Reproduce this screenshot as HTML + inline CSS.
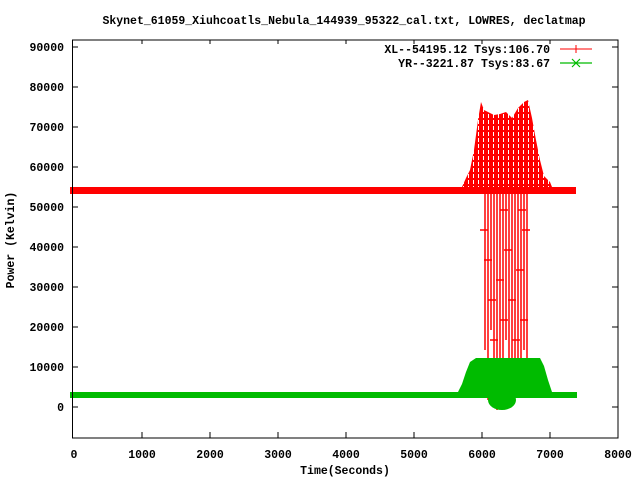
<!DOCTYPE html>
<html><head><style>
body{margin:0;background:#fff}
svg{display:block}
text{font-family:"Liberation Mono",monospace;font-weight:bold;font-size:11.5px;fill:#000}
</style></head><body>
<svg width="640" height="480" viewBox="0 0 640 480" xmlns="http://www.w3.org/2000/svg">
<defs>
<pattern id="hp" width="5" height="6" patternUnits="userSpaceOnUse">
<rect width="5" height="6" fill="#f00"/><rect x="3" y="0" width="1" height="4" fill="#fff"/>
</pattern>
</defs>
<rect width="640" height="480" fill="#fff"/>
<text x="344" y="24" text-anchor="middle">Skynet_61059_Xiuhcoatls_Nebula_144939_95322_cal.txt, LOWRES, declatmap</text>
<g text-anchor="end">
<text x="64" y="51">90000</text><text x="64" y="91">80000</text><text x="64" y="131">70000</text>
<text x="64" y="171">60000</text><text x="64" y="211">50000</text><text x="64" y="251">40000</text>
<text x="64" y="291">30000</text><text x="64" y="331">20000</text><text x="64" y="371">10000</text>
<text x="64" y="411">0</text></g>
<g text-anchor="middle">
<text x="74" y="458">0</text><text x="142" y="458">1000</text><text x="210" y="458">2000</text>
<text x="278" y="458">3000</text><text x="346" y="458">4000</text><text x="414" y="458">5000</text>
<text x="482" y="458">6000</text><text x="550" y="458">7000</text><text x="618" y="458">8000</text></g>
<text x="345" y="474" text-anchor="middle">Time(Seconds)</text>
<text transform="translate(14,240) rotate(-90)" text-anchor="middle">Power (Kelvin)</text>
<g stroke="#000" stroke-width="1">
<path d="M72 47h6M72 87h6M72 127h6M72 167h6M72 207h6M72 247h6M72 287h6M72 327h6M72 367h6M72 407h6"/>
<path d="M618 47h-6M618 87h-6M618 127h-6M618 167h-6M618 207h-6M618 247h-6M618 287h-6M618 327h-6M618 367h-6M618 407h-6"/>
<path d="M142 438v-6M210 438v-6M278 438v-6M346 438v-6M414 438v-6M482 438v-6M550 438v-6"/>
<path d="M142 40v4M210 40v4M278 40v4M346 40v4M414 40v4M482 40v4M550 40v4"/>
</g>
<g fill="#f00">
<rect x="70" y="187" width="506" height="7"/>
<path d="M462 187 L466 178 L470 170 L474 150 L478 120 L481 102 L484 110 L488 112 L494 115 L500 114 L506 112 L512 118 L518 108 L524 102 L528 100 L532 118 L536 140 L540 160 L544 176 L550 182 L552 187Z" fill="url(#hp)"/>
</g>
<g stroke="#f00" stroke-width="1.5">
<path d="M485 190V350M488 190V400M491 190V330M494 190V380M497 190V410M500 190V360M503 190V405M506 190V340M509 190V390M512 190V370M515 190V395M518 190V360M521 190V385M524 190V350M527 190V360"/>
<path d="M480 230h8M484 260h8M488 300h8M490 340h8M496 280h8M500 320h8M504 250h8M508 300h8M512 340h8M516 270h8M520 320h8M522 230h8M486 380h8M498 395h8M510 370h8M500 210h8M518 210h8"/>
</g>
<g stroke="#f00" stroke-width="1"><path d="M560 49h32M576 45v8"/></g>
<g fill="#0b0">
<rect x="70" y="392" width="507" height="6"/>
<path d="M458 392 L462 384 L466 372 L470 362 L476 358 L540 358 L544 366 L548 380 L552 392Z"/>
<ellipse cx="502" cy="400" rx="14" ry="10"/>
</g>
<g stroke="#0b0" stroke-width="1.2"><path d="M560 63h32M572 59l8 8M580 59l-8 8"/></g>
<text x="550" y="53" text-anchor="end">XL--54195.12 Tsys:106.70</text>
<text x="550" y="67" text-anchor="end">YR--3221.87 Tsys:83.67</text>
<rect x="72.5" y="40" width="545.5" height="398" fill="none" stroke="#000" stroke-width="1"/>
</svg>
</body></html>
